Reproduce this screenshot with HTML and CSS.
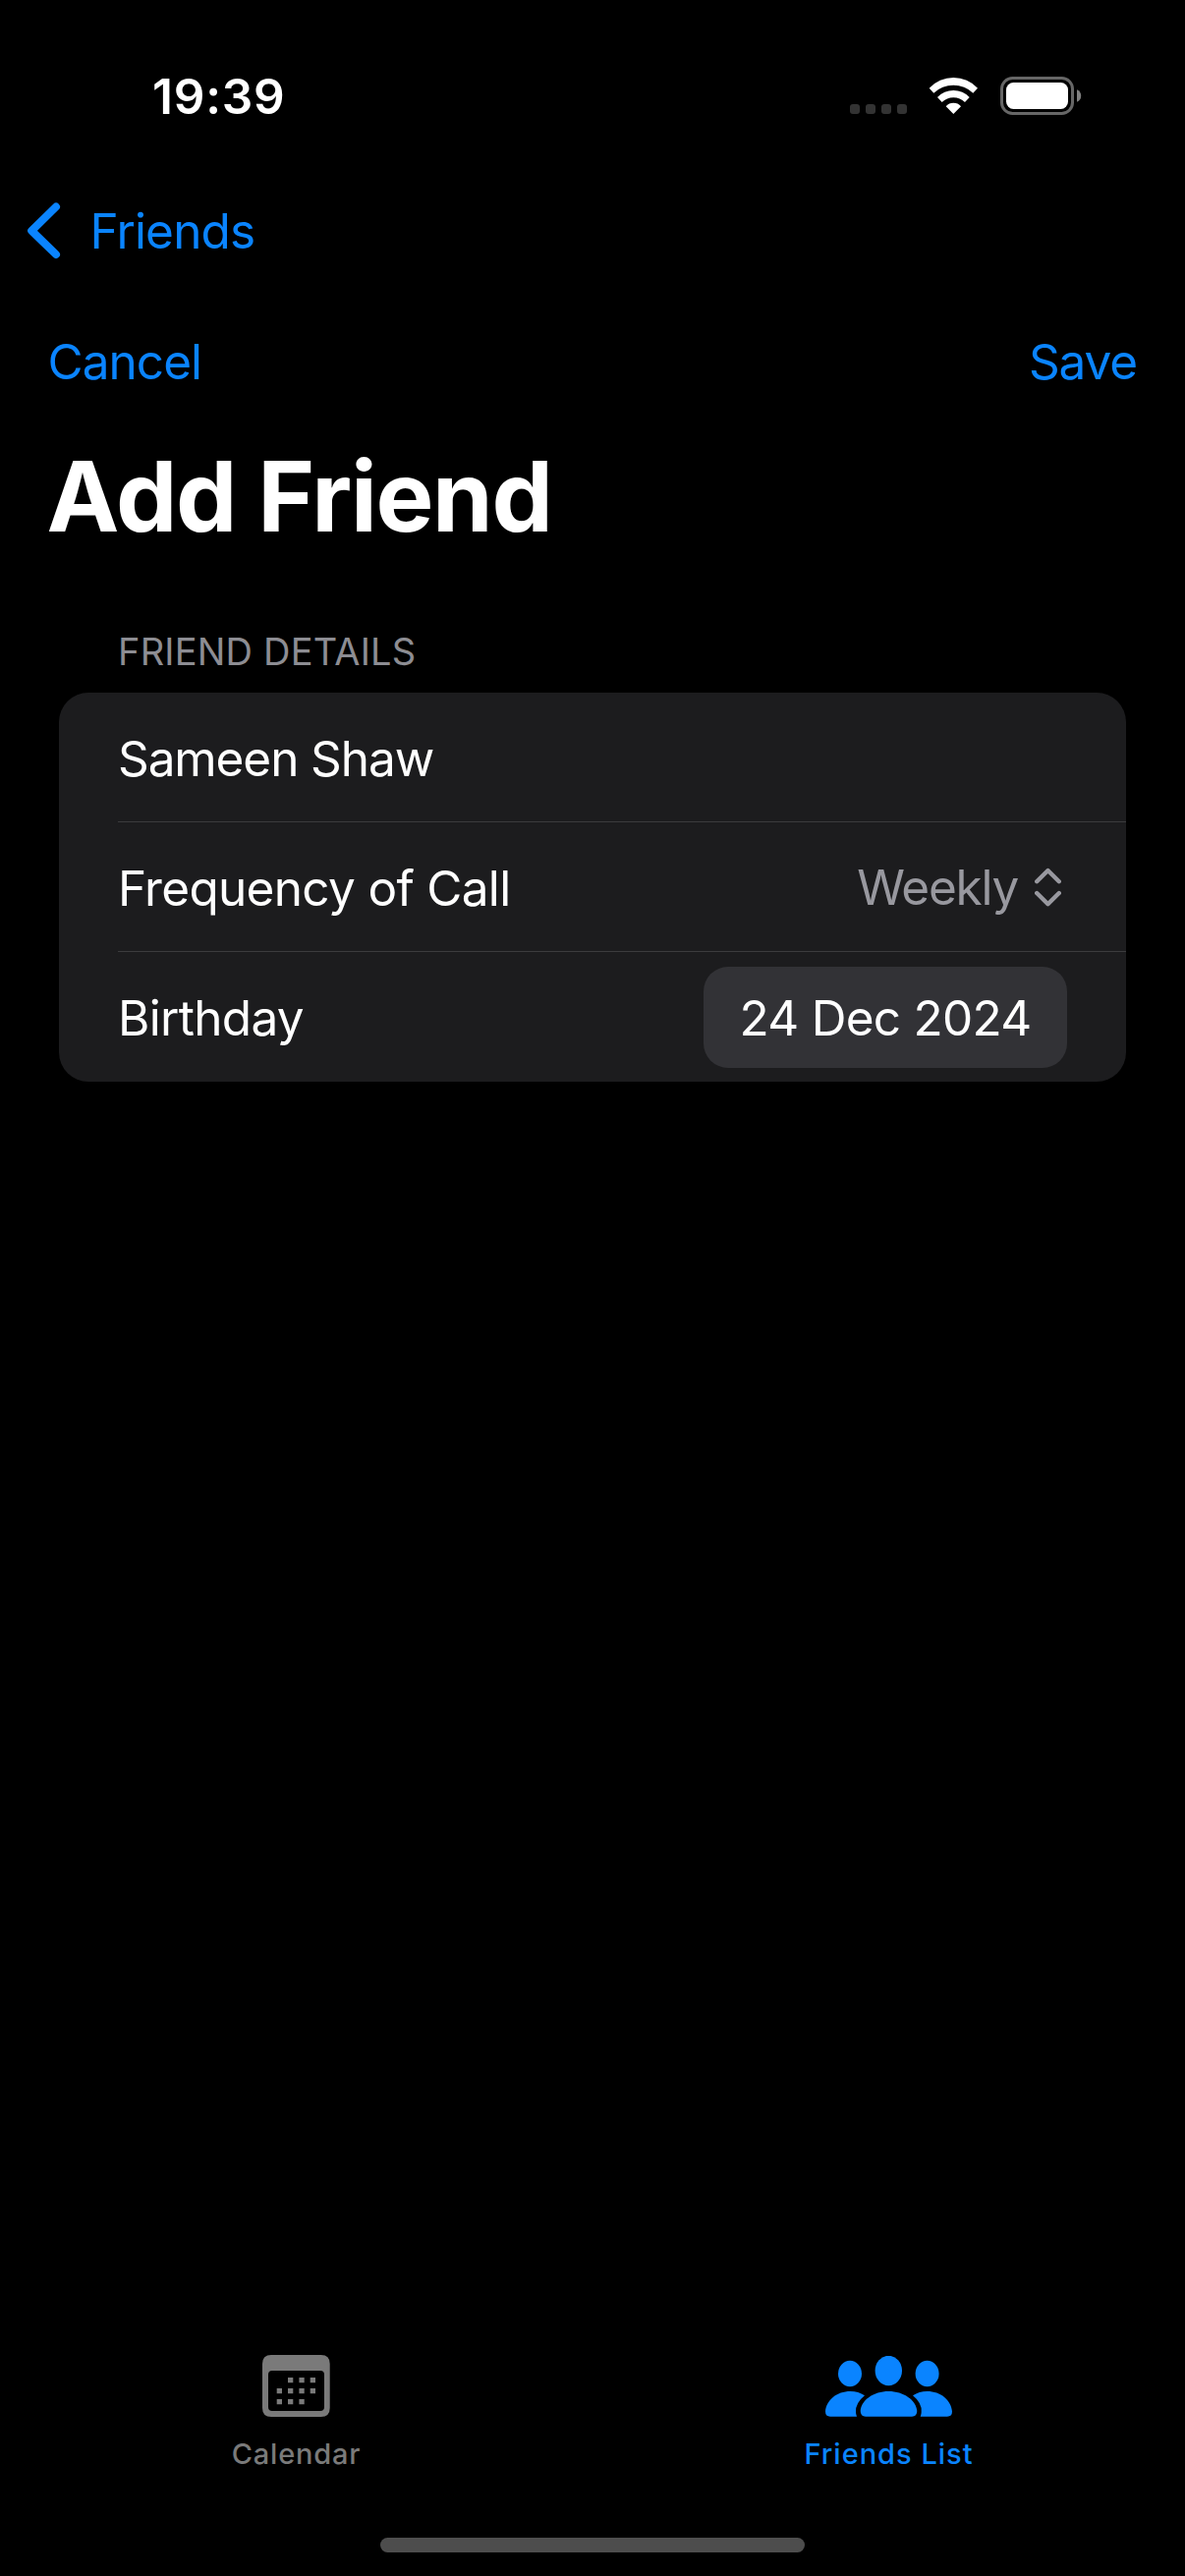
FILE: index.html
```html
<!DOCTYPE html>
<html lang="en">
<head>
<meta charset="utf-8">
<title>Add Friend</title>
<link rel="stylesheet" href="styles.css">
</head>
<body>
<div class="screen">
  <header class="status-bar">
    <span class="time">19:39</span>
    <div class="status-icons">
      <div class="signal"><i></i><i></i><i></i><i></i></div>
      <svg class="wifi" viewBox="0 0 51 39"><path d="M.7 11.7A33.6 33.6 0 0 1 50 11.7L45.3 16.7A29 29 0 0 0 5.3 16.7ZM9 21A22.5 22.5 0 0 1 41.7 21L37 26A16.7 16.7 0 0 0 13.7 26ZM17.7 30.3A9.8 9.8 0 0 1 33 30.3L25.3 38Z"/></svg>
      <svg class="battery" viewBox="0 0 83 39"><rect x="1.5" y="1.5" width="72" height="36" rx="11" class="battery-shell"/><rect x="6" y="6" width="63" height="27" rx="7.5" class="battery-fill"/><path d="M78 13.3Q82.2 15 82.2 19.5T78 25.7Z" class="battery-cap"/></svg>
    </div>
  </header>
  <nav class="nav-bar">
    <svg class="back-icon" viewBox="0 0 34 58"><path d="M29 4.500L4.200 28.800L29 53"/></svg>
    <a class="link back">Friends</a>
  </nav>
  <div class="actions">
    <a class="link cancel">Cancel</a>
    <a class="link save">Save</a>
  </div>
  <h1 class="title">Add Friend</h1>
  <main class="form">
    <h2 class="section-label">FRIEND DETAILS</h2>
    <div class="card">
      <div class="row"><span class="name">Sameen Shaw</span></div>
      <div class="row">
        <span class="label">Frequency of Call</span>
        <div class="picker"><span class="picker-value">Weekly</span><svg class="updown" viewBox="0 0 27 40"><path d="M2.2 14.2L13.5 3L24.8 14.2M2.2 26L13.5 37.2L24.8 26"/></svg></div>
      </div>
      <div class="row">
        <span class="label">Birthday</span>
        <div class="date-pill">24 Dec 2024</div>
      </div>
    </div>
  </main>
  <footer class="tab-bar">
    <div class="tab">
      <svg class="calendar-icon" viewBox="0 0 69 63"><path fill-rule="evenodd" d="M9 0H59.7Q68.7 0 68.7 9V54Q68.7 63 59.7 63H9Q0 63 0 54V9Q0 0 9 0ZM10 16Q6 16 6 20V53Q6 57 10 57H59Q63 57 63 53V20Q63 16 59 16Z"/><path d="M26 23h5.3v5.3H26zM37.4 23h5.3v5.3h-5.3zM48.7 23H54v5.3h-5.3zM14.7 34H20v5.3h-5.3zM26 34h5.3v5.3H26zM37.4 34h5.3v5.3h-5.3zM48.7 34H54v5.3h-5.3zM14.7 45H20v5.3h-5.3zM26 45h5.3v5.3H26zM37.4 45h5.3v5.3h-5.3z"/></svg>
      <span class="tab-label">Calendar</span>
    </div>
    <div class="tab active">
      <svg class="people-icon" viewBox="0 0 129 63"><ellipse cx="25" cy="18" rx="12" ry="13.2"/><ellipse cx="64.3" cy="15" rx="13.7" ry="15.2"/><ellipse cx="103.6" cy="18" rx="12" ry="13.2"/><path d="M40.9 61.7Q35.7 61.7 35.7 56C36.5 45 49 36 64.3 36S92.5 45 93.3 56Q93.3 61.7 88.1 61.7ZM5 61.7Q0 61.7 0 56.5C1 45 11.5 36 25.5 36Q33.5 36 40 40.3Q30.5 48 31 57Q31 59.5 32 61.7ZM124 61.7Q129 61.7 129 56.5C128 45 117.5 36 103.5 36Q95.5 36 89 40.3Q98.5 48 97.7 57Q97.7 59.5 96.7 61.7Z"/></svg>
      <span class="tab-label">Friends List</span>
    </div>
  </footer>
  <div class="home-indicator"></div>
</div>
</body>
</html>
```
FILE: styles.css
```css
* { box-sizing: border-box; }
body {
  margin: 0;
  background: #000;
  color: #fff;
  font-family: Inter, "Liberation Sans", sans-serif;
  font-size: 49.5px;
  line-height: 60px;
}
h1, h2 { margin: 0; }
svg { display: block; flex: none; }
.screen {
  width: 1206px;
  height: 2622px;
  display: flex;
  flex-direction: column;
}
.status-bar {
  height: 168px;
  padding: 68px 105px 0 155px;
  display: flex;
  justify-content: space-between;
  align-items: flex-start;
}
.time { font-weight: 600; letter-spacing: 0.8px; }
.status-icons {
  display: flex;
  align-items: flex-end;
  padding-top: 10px;
}
.signal { display: flex; gap: 6px; padding-bottom: 1px; margin-right: 22px; }
.signal i { width: 10px; height: 10px; border-radius: 3px; background: #333; }
.wifi { width: 51px; height: 39px; fill: #fff; margin-right: 22px; }
.battery { width: 83px; height: 39px; }
.battery-shell { fill: none; stroke: #666; stroke-width: 3; }
.battery-fill { fill: #fff; }
.battery-cap { fill: #808080; }
.link { color: #0a84ff; }
.nav-bar {
  height: 134px;
  padding: 0 28px;
  display: flex;
  align-items: center;
}
.back-icon {
  width: 34px;
  height: 58px;
  fill: none;
  stroke: #0a84ff;
  stroke-width: 8;
  stroke-linecap: round;
  stroke-linejoin: round;
  margin-right: 29.5px;
}
.back { letter-spacing: -0.85px; }
.cancel { letter-spacing: -0.95px; }
.save { letter-spacing: -1.2px; }
.actions {
  height: 132px;
  padding: 0 49.2px 0 48.5px;
  display: flex;
  justify-content: space-between;
  align-items: center;
}
.title {
  padding: 11px 47.6px 0;
  font-size: 99px;
  line-height: 120px;
  font-weight: 700;
  letter-spacing: -1.3px;
}
.form { padding: 75px 60px 0; flex: 1; }
.section-label {
  padding-left: 60px;
  font-size: 38px;
  line-height: 46px;
  height: 65px;
  font-weight: 400;
  letter-spacing: 0.2px;
  color: #8d8d93;
}
.card {
  background: #1c1c1e;
  border-radius: 30px;
  padding-left: 60px;
}
.row {
  height: 132px;
  padding: 2px 60px 0 0;
  display: flex;
  align-items: center;
  justify-content: space-between;
}
.row + .row { border-top: 1px solid #3b3b3d; }
.row:first-child { height: 131px; padding-top: 3px; }
.row:last-child { height: 133px; padding-top: 1px; }
.name { letter-spacing: -1.1px; }
.label { letter-spacing: -0.68px; padding-top: 1px; }
.picker {
  display: flex;
  align-items: center;
  gap: 17px;
  padding: 0 6px 1px 0;
  color: #98989f;
}
.picker-value { letter-spacing: -1.25px; }
.updown {
  width: 27px;
  height: 40px;
  fill: none;
  stroke: #98989f;
  stroke-width: 4.4;
  stroke-linecap: round;
  stroke-linejoin: round;
}
.date-pill {
  width: 370px;
  height: 103px;
  padding-top: 1px;
  border-radius: 25px;
  background: #323236;
  display: flex;
  align-items: center;
  justify-content: center;
  letter-spacing: -0.74px;
}
.tab-bar { display: flex; height: 186px; }
.tab {
  flex: 1;
  display: flex;
  flex-direction: column;
  align-items: center;
  fill: #7a7a7a;
  color: #7a7a7a;
}
.tab.active { fill: #0a84ff; color: #0a84ff; }
.calendar-icon { width: 69px; height: 63px; margin-bottom: 1px; }
.people-icon { width: 129px; height: 63px; margin-top: 1px; }
.tab-label {
  margin-top: 19px;
  font-size: 29px;
  line-height: 36px;
  font-weight: 500;
  letter-spacing: 0.8px;
}
.active .tab-label { letter-spacing: 1px; }
.home-indicator {
  width: 432px;
  height: 15px;
  margin: 0 auto 24px;
  border-radius: 7.5px;
  background: #4d4d4d;
}
```
